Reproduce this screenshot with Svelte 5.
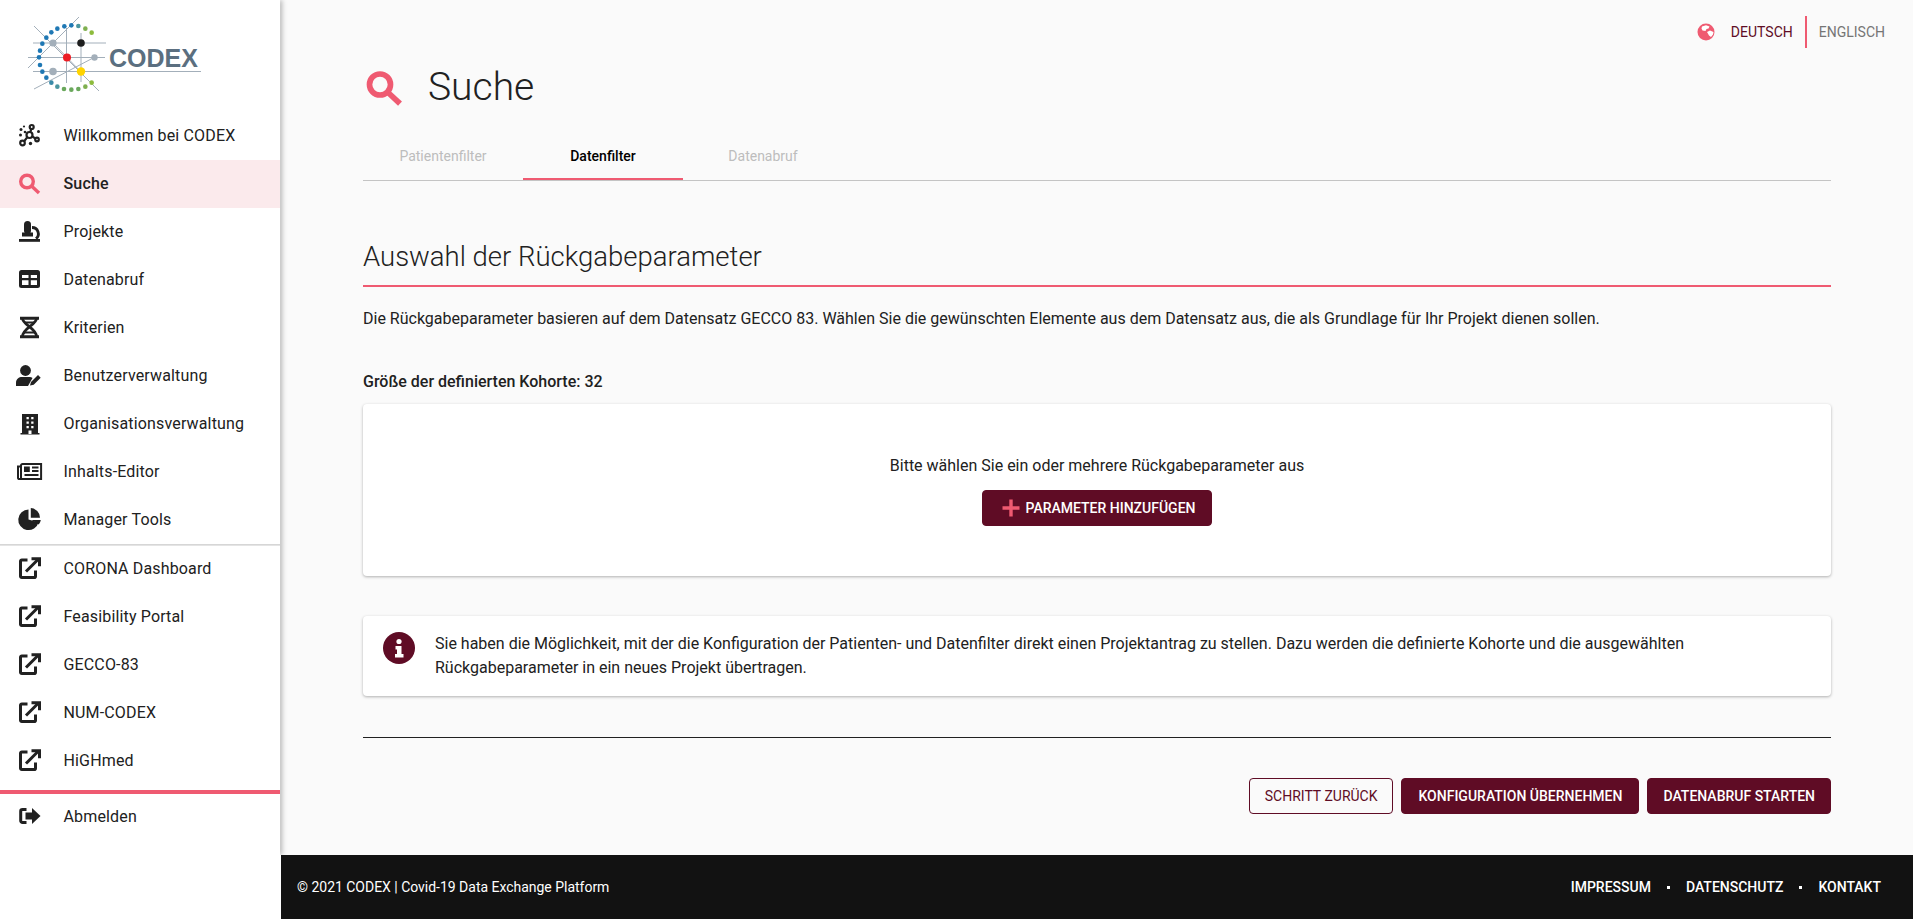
<script>
  const top = [
    { label: 'Willkommen bei CODEX', icon: 'hub' },
    { label: 'Suche', icon: 'search', active: true },
    { label: 'Projekte', icon: 'scope' },
    { label: 'Datenabruf', icon: 'table' },
    { label: 'Kriterien', icon: 'dna' },
    { label: 'Benutzerverwaltung', icon: 'user' },
    { label: 'Organisationsverwaltung', icon: 'building' },
    { label: 'Inhalts-Editor', icon: 'news' },
    { label: 'Manager Tools', icon: 'pie' }
  ];
  const links = ['CORONA Dashboard', 'Feasibility Portal', 'GECCO-83', 'NUM-CODEX', 'HiGHmed'];
  const arc = [
    [275,98,'#8dbb3c'],[256,86,'#7fb04f'],[235,78,'#4a96a0'],[214,76,'#1f78b4'],[193,79,'#1f78b4'],[172,86,'#1f78b4'],[154,97,'#1f78b4'],
    [139,113,'#1f78b4'],[127,131,'#1f78b4'],[120,152,'#1f78b4'],[117,172,'#1f78b4'],[120,195,'#1f78b4'],[127,215,'#1f78b4'],[139,233,'#1f78b4'],
    [154,248,'#3a8aa8'],[172,260,'#4a96a0'],[192,267,'#6aa85c'],[214,269,'#6aa85c'],[235,267,'#6aa85c'],[256,260,'#7fb04f'],[275,248,'#8dbb3c']
  ].map(([x, y, c]) => ({ x: x / 3, y: y / 3, c }));
  const grid = [
    [33,43,106,43],[28,57.5,105,57.5],[33,71.5,201,71.5],[66.5,28,66.5,83],[81,33,81,82],
    [28,68,79,17],[34,26,99,91],[34,89,94,57.5],[53,43,81,72]
  ];
</script>

{#snippet icon(name)}
  <svg class="ico" viewBox="0 0 24 24" aria-hidden="true">
    {#if name === 'hub'}
      <g fill="none" stroke="#212121" stroke-width="2.200">
        <circle cx="11.500" cy="12" r="3"/><circle cx="13.700" cy="4" r="2"/><circle cx="4.500" cy="20" r="2.300"/><circle cx="19" cy="16.500" r="1.800"/>
        <path d="M12.300 9 13.300 6M9.300 14.200 6 18.500M14.300 13.300 17.400 15.700"/>
      </g>
      <g fill="#212121"><circle cx="3" cy="6.500" r="1.500"/><circle cx="6" cy="3.500" r="1.100"/><circle cx="2.500" cy="12" r="1.500"/><circle cx="20.500" cy="8.500" r="1.500"/><circle cx="12.500" cy="20.500" r="1.700"/><circle cx="7" cy="9" r="1.300"/></g>
    {:else if name === 'search'}
      <circle cx="9" cy="10.500" r="6.300" fill="none" stroke="#ef5a71" stroke-width="3.400"/>
      <path d="M13.800 15.300 21 22" fill="none" stroke="#ef5a71" stroke-width="3.400"/>
    {:else if name === 'scope'}
      <rect x="6" y="2" width="7" height="13" rx="3.500" fill="#212121"/>
      <rect x="4" y="13.500" width="11" height="4" fill="#212121"/>
      <path d="M14 8.500a6.300 6.300 0 0 1 4 11.200" fill="none" stroke="#212121" stroke-width="2.800"/>
      <rect x="1" y="20" width="21" height="2.800" fill="#212121"/>
    {:else if name === 'table'}
      <rect x="1" y="3" width="21" height="18" rx="2.500" fill="#212121"/>
      <path d="M4 8h6.500v3H4zM12.800 8h6.200v3h-6.200zM4 13.300h6.500v4.700H4zM12.800 13.300h6.200v4.700h-6.200z" fill="#fff"/>
    {:else if name === 'dna'}
      <g fill="none" stroke="#212121">
        <path d="M2 3.200h19M2 21.800h19" stroke-width="3"/>
        <path d="M4.500 3.500c0 6 14 10 14 18M18.500 3.500c0 6-14 10-14 18" stroke-width="2.800"/>
        <path d="M6 7.500h11M6 17.500h11" stroke-width="2.200"/>
      </g>
    {:else if name === 'user'}
      <circle cx="7.500" cy="7.500" r="5.400" fill="#212121"/>
      <path d="M-2 23v-3.500c0-3.500 3-5.500 6-5.500h7c1.500 0 2.500.3 3.500 1L10 23z" fill="#212121"/>
      <path d="M12 22.500l1-3.500 7-7 2.700 2.700-7 7z" fill="#212121"/>
    {:else if name === 'building'}
      <path d="M4 3h16v19h1.500v1.500h-19V22H4z" fill="#212121"/>
      <path d="M8.500 6h2.300v2.300H8.500zM13.200 6h2.300v2.300h-2.300zM8.500 10.500h2.300v2.300H8.500zM13.200 10.500h2.300v2.300h-2.300zM8.500 15h2.300v2.300H8.500zM13.200 15h2.300v2.300h-2.300zM10.500 19.500h3V23h-3z" fill="#fff"/>
    {:else if name === 'news'}
      <g fill="none" stroke="#212121" stroke-width="2">
        <path d="M3 20V6.500a1.500 1.500 0 0 1 1.500-1.500H23.100v15H1.500A1.100 1.100 0 0 1 0 19V7.500h3"/>
        <path d="M14 8.500h6.500M14 12h6.500M6.500 16h14"/>
      </g>
      <rect x="6" y="7.500" width="5.800" height="5.500" fill="#212121"/>
    {:else if name === 'pie'}
      <path d="M10.500 2.500a10.300 10.300 0 1 0 10 13L10.500 12.500z" fill="#212121"/>
      <path d="M12.800 1a10 10 0 0 1 9.200 9.800h-9.200zM13.500 13h9.300a9 9 0 0 1-2 4.500z" fill="#212121"/>
    {:else if name === 'ext'}
      <g fill="none" stroke="#212121" stroke-width="3">
        <path d="M9.500 4H3.800A1.300 1.300 0 0 0 2.500 5.300v15A1.300 1.300 0 0 0 3.800 21.600h12.400a1.300 1.300 0 0 0 1.300-1.300V14.500"/>
        <path d="M8 15.500 20 3.500"/>
        <path d="M13.500 2.800h8v7.500"/>
      </g>
    {:else if name === 'logout'}
      <path d="M8.500 5.500H4.500A1.800 1.800 0 0 0 2.700 7.300v9.400a1.800 1.800 0 0 0 1.800 1.800h4" fill="none" stroke="#212121" stroke-width="3"/>
      <path d="M7.500 8.500h6.500V4l8.500 8-8.500 8v-4.500H7.500z" fill="#212121"/>
    {/if}
  </svg>
{/snippet}

<div class="shell">
  <aside class="drawer">
    <div class="paper">
      <div class="logo">
        <svg width="281" height="112" viewBox="0 0 281 112" role="img" aria-label="CODEX">
          {#each grid as g}
            <line x1={g[0]} y1={g[1]} x2={g[2]} y2={g[3]} stroke="#a3afba" stroke-width="1"/>
          {/each}
          {#each arc as d}
            <circle cx={d.x} cy={d.y} r="2.300" fill={d.c}/>
          {/each}
          <circle cx="53" cy="43" r="3.600" fill="#a3afba"/>
          <circle cx="81" cy="43" r="3.800" fill="#1d1d1d"/>
          <circle cx="67" cy="57.500" r="4" fill="#ed1c24"/>
          <circle cx="94.500" cy="57.500" r="3.200" fill="#a3afba"/>
          <circle cx="53" cy="71.500" r="3.800" fill="#a3afba"/>
          <circle cx="81" cy="71.500" r="4.200" fill="#ffd400"/>
          <text x="109" y="66.500" class="logotext">CODEX</text>
        </svg>
      </div>
      <nav>
        {#each top as item}
          <div class="item" class:active={item.active}>
            {@render icon(item.icon)}
            <span>{item.label}</span>
          </div>
        {/each}
      </nav>
      <div class="rule"></div>
      <nav>
        {#each links as l}
          <div class="item">
            {@render icon('ext')}
            <span>{l}</span>
          </div>
        {/each}
      </nav>
      <div class="redrule"></div>
      <div class="item">
        {@render icon('logout')}
        <span>Abmelden</span>
      </div>
    </div>
  </aside>

  <div class="column">
    <main>
      <div class="lang">
        <svg class="globe" viewBox="0 0 18 18" aria-hidden="true">
          <circle cx="9" cy="9" r="8.500" fill="#ef5a71"/>
          <path d="M5 3.500 9 2.300l3.500 1.200-1 2-2 .5-1 2-3-.5-1-2zM10 9l3-1.500 3.500 1.500-.5 2.500-2 2.500-2-1.500z" fill="#fff"/>
        </svg>
        <span class="de">DEUTSCH</span>
        <span class="bar"></span>
        <span class="en">ENGLISCH</span>
      </div>

      <div class="content">
        <div class="title">
          <svg class="bigsearch" viewBox="0 0 24 24" aria-hidden="true">
            <circle cx="9" cy="10.500" r="6.300" fill="none" stroke="#ef5a71" stroke-width="3.400"/>
            <path d="M13.800 15.300 21 22" fill="none" stroke="#ef5a71" stroke-width="3.400"/>
          </svg>
          <h1>Suche</h1>
        </div>

        <div class="tabs">
          <div class="tab off">Patientenfilter</div>
          <div class="tab on">Datenfilter</div>
          <div class="tab off">Datenabruf</div>
        </div>

        <h2>Auswahl der Rückgabeparameter</h2>
        <p class="lead">Die Rückgabeparameter basieren auf dem Datensatz GECCO 83. Wählen Sie die gewünschten Elemente aus dem Datensatz aus, die als Grundlage für Ihr Projekt dienen sollen.</p>
        <p class="size">Größe der definierten Kohorte: 32</p>

        <section class="card empty">
          <p>Bitte wählen Sie ein oder mehrere Rückgabeparameter aus</p>
          <button class="btn add">
            <svg viewBox="0 0 18 18" width="18" height="18" aria-hidden="true"><path d="M9 .5v17M.5 9h17" stroke="#ef5a71" stroke-width="3.400" fill="none"/></svg>
            Parameter hinzufügen
          </button>
        </section>

        <section class="card info">
          <svg class="infoicon" viewBox="0 0 32 32" aria-hidden="true">
            <circle cx="16" cy="16" r="16" fill="#5f0c25"/>
            <circle cx="16" cy="9.500" r="2.600" fill="#fff"/>
            <path d="M12.500 14h6v8h2v3.500h-8.500V22h2v-4.500h-1.500z" fill="#fff"/>
          </svg>
          <p>Sie haben die Möglichkeit, mit der die Konfiguration der Patienten- und Datenfilter direkt einen Projektantrag zu stellen. Dazu werden die definierte Kohorte und die ausgewählten Rückgabeparameter in ein neues Projekt übertragen.</p>
        </section>

        <hr />

        <div class="actions">
          <button class="btn ghost tight">Schritt zurück</button>
          <button class="btn">Konfiguration übernehmen</button>
          <button class="btn tight">Datenabruf starten</button>
        </div>
      </div>
    </main>

    <footer>
      <span class="copy">© 2021 CODEX | Covid-19 Data Exchange Platform</span>
      <div class="flinks">
        <span>Impressum</span><i></i><span>Datenschutz</span><i></i><span>Kontakt</span>
      </div>
    </footer>
  </div>
</div>

<style>
  :global(body) {
    margin: 0;
    background: #fafafa;
    font-family: Roboto, "Liberation Sans", sans-serif;
    color: #212121;
  }
  .shell {
    display: flex;
    height: 919px;
    overflow: hidden;
  }
  .drawer {
    flex: 0 0 281px;
    background: #fff;
    position: relative;
    z-index: 2;
  }
  .paper {
    width: 280px;
    height: 855px;
    background: #fff;
    box-shadow: 2px 0 5px rgba(0, 0, 0, 0.28);
    clip-path: inset(0 -10px 0 0);
  }
  .logo {
    height: 112px;
  }
  .logo svg {
    display: block;
  }
  .logotext {
    font-family: "Liberation Sans", sans-serif;
    font-weight: 700;
    font-size: 25px;
    fill: #5b6f80;
  }
  nav {
    display: flex;
    flex-direction: column;
  }
  .item {
    display: flex;
    align-items: center;
    height: 48px;
    box-sizing: border-box;
    padding: 0 0 2px 18px;
    gap: 21.500px;
    font-size: 16px;
    letter-spacing: 0.15px;
  }
  .item.active {
    background: #fbeaec;
    font-weight: 500;
  }
  .ico {
    width: 24px;
    height: 24px;
    flex: none;
    overflow: visible;
  }
  .rule {
    height: 1px;
    background: #d6d6d6;
    box-shadow: 0 1px 0 #e4e4e4;
  }
  .redrule {
    height: 4px;
    margin-top: 5px;
    margin-bottom: -1px;
    background: #ef5a71;
  }
  .column {
    flex: 1;
    display: flex;
    flex-direction: column;
    min-width: 0;
  }
  main {
    flex: 1;
  }
  .lang {
    height: 64px;
    display: flex;
    align-items: center;
    justify-content: flex-end;
    padding-right: 28px;
    font-size: 14px;
  }
  .globe {
    width: 18px;
    height: 18px;
    margin-right: 16px;
  }
  .de {
    color: #5f0c25;
  }
  .bar {
    width: 2px;
    height: 32px;
    background: #ef5a71;
    margin: 0 12px;
  }
  .en {
    color: #757575;
  }
  .content {
    padding: 0 82px;
  }
  .title {
    display: flex;
    align-items: center;
    height: 48px;
    margin-top: -1px;
  }
  .bigsearch {
    width: 40px;
    height: 40px;
    margin-left: 2px;
    flex: none;
  }
  h1 {
    margin: 0 0 0 23px;
    font-size: 39px;
    font-weight: 300;
    line-height: 48px;
  }
  .tabs {
    display: flex;
    margin-top: 21px;
    border-bottom: 1px solid #c4c4c4;
  }
  .tab {
    width: 160px;
    height: 48px;
    display: flex;
    align-items: center;
    justify-content: center;
    font-size: 14px;
    font-weight: 500;
    box-sizing: border-box;
  }
  .tab.off {
    color: #bdbdbd;
    font-weight: 400;
  }
  .tab.on {
    color: #000;
    padding-top: 2px;
    border-bottom: 2px solid #ef5a71;
  }
  h2 {
    margin: 58px 0 0;
    height: 48px;
    line-height: 36px;
    font-size: 27.500px;
    font-weight: 300;
    border-bottom: 2px solid #ef5a71;
    box-sizing: border-box;
  }
  .lead {
    margin: 20px 0 0;
    font-size: 16px;
    line-height: 24px;
  }
  .size {
    margin: 39px 0 0;
    font-size: 16px;
    font-weight: 500;
    line-height: 24px;
  }
  .card {
    background: #fff;
    border-radius: 4px;
    box-shadow: 0 1px 3px rgba(0, 0, 0, 0.3);
  }
  .empty {
    margin-top: 10px;
    height: 172px;
    box-sizing: border-box;
    padding-top: 50px;
    display: flex;
    flex-direction: column;
    align-items: center;
  }
  .empty p {
    margin: 0 0 12px;
    font-size: 16px;
    line-height: 24px;
  }
  .info {
    margin-top: 40px;
    height: 80px;
    display: flex;
    align-items: center;
    box-sizing: border-box;
    padding: 0 20px;
  }
  .infoicon {
    width: 32px;
    height: 32px;
    flex: none;
    margin-right: 20px;
    margin-bottom: 16px;
  }
  .info p {
    margin: 0;
    font-size: 16px;
    line-height: 24px;
  }
  hr {
    margin: 41px 0 0;
    border: 0;
    height: 1px;
    background: #212121;
  }
  .actions {
    display: flex;
    justify-content: flex-end;
    gap: 8px;
    margin-top: 40px;
  }
  .btn {
    height: 36px;
    padding: 0 16px;
    border: 1px solid #5f0c25;
    border-radius: 4px;
    background: #5f0c25;
    color: #fff;
    font-family: inherit;
    font-size: 14px;
    font-weight: 500;
    text-transform: uppercase;
    display: inline-flex;
    align-items: center;
    box-sizing: border-box;
  }
  .btn.tight {
    padding: 0 15px;
  }
  .btn.ghost {
    background: transparent;
    color: #5f0c25;
    font-weight: 400;
  }
  .add {
    gap: 6px;
    padding: 0 16px 0 19px;
  }
  footer {
    height: 64px;
    flex: none;
    background: #121212;
    color: #fff;
    display: flex;
    align-items: center;
    justify-content: space-between;
    padding: 0 32px 0 16px;
    font-size: 14px;
    font-weight: 500;
  }
  .copy {
    font-weight: 400;
    letter-spacing: -0.02px;
  }
  .flinks {
    display: flex;
    align-items: center;
    gap: 16px;
    text-transform: uppercase;
  }
  .flinks i {
    width: 3px;
    height: 3px;
    background: #fff;
  }
</style>
